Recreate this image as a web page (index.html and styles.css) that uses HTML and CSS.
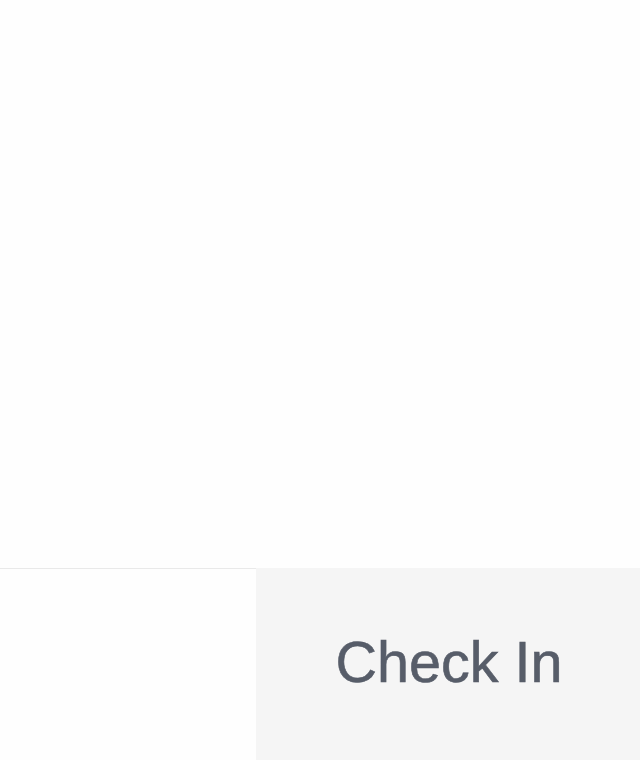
FILE: index.html
```html
<!DOCTYPE html>
<html>
<head>
<meta charset="utf-8">
<link rel="stylesheet" href="styles.css">
</head>
<body>
<div class="app">
  <main class="content"></main>
  <footer class="bar">
    <div class="bar-left"></div>
    <button class="checkin">Check In</button>
  </footer>
</div>
</body>
</html>
```
FILE: styles.css
```css
html, body {
  margin: 0;
  padding: 0;
  background: #fefefe;
}
.app {
  width: 640px;
  height: 760px;
  display: flex;
  flex-direction: column;
}
.content {
  height: 568px;
  background: #fefefe;
}
.bar {
  display: flex;
  height: 192px;
}
.bar-left {
  width: 256px;
  border-top: 1px solid #e9e9e9;
  background: #fefefe;
}
.checkin {
  flex: 1;
  margin: 0;
  padding: 0 0 4px 2px;
  border: none;
  background: #f5f5f5;
  color: #575d69;
  font-family: "Liberation Sans", Arial, sans-serif;
  font-size: 57.5px;
  font-weight: 400;
  -webkit-text-stroke: 0.6px #575d69;
  display: flex;
  align-items: center;
  justify-content: center;
}
```
